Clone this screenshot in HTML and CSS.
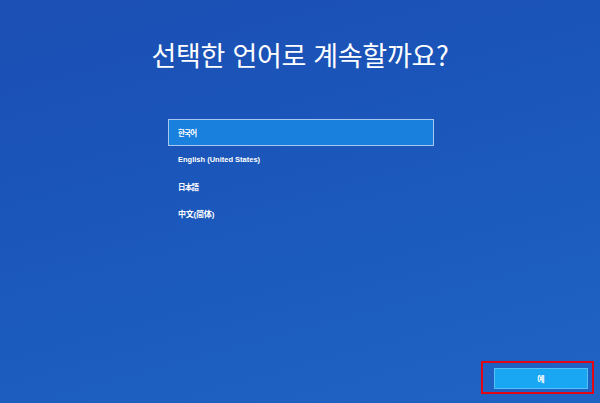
FILE: index.html
```html
<!DOCTYPE html>
<html lang="ko">
<head>
<meta charset="utf-8">
<title>언어 선택</title>
<link rel="stylesheet" href="styles.css">
</head>
<body>
<main class="screen">
  <h1 class="title">선택한 언어로 계속할까요?</h1>
  <ul class="lang-list">
    <li class="lang-item is-selected cjk">한국어</li>
    <li class="lang-item">English (United States)</li>
    <li class="lang-item cjk">日本語</li>
    <li class="lang-item cjk-mixed">中文(简体)</li>
  </ul>
  <footer class="actions">
    <div class="highlight">
      <button class="btn-yes" type="button">예</button>
    </div>
  </footer>
</main>
</body>
</html>
```

FILE: styles.css
```css
html, body {
  margin: 0;
  padding: 0;
}

body {
  width: 600px;
  height: 403px;
  overflow: hidden;
  font-family: "Liberation Sans", "Noto Sans CJK KR", "Noto Sans CJK JP", sans-serif;
  color: #ffffff;
}

.screen {
  width: 600px;
  height: 403px;
  display: flex;
  flex-direction: column;
  background: linear-gradient(165deg, #1c4fb4 0%, #1b55b9 35%, #1c5cbf 65%, #1f63c5 100%);
}

.title {
  margin: 38px 0 0;
  font-family: "Noto Sans CJK KR", "Liberation Sans", sans-serif;
  font-weight: 400;
  font-size: 27px;
  line-height: 33px;
  letter-spacing: -0.3px;
  text-align: center;
}

.lang-list {
  list-style: none;
  margin: 48px 0 0 168px;
  padding: 0;
  width: 266px;
}

.lang-item {
  box-sizing: border-box;
  height: 27px;
  display: flex;
  align-items: center;
  padding-left: 9px;
  font-size: 7.5px;
  font-weight: 700;
  border: 1.5px solid transparent;
}

.lang-item.cjk {
  font-size: 7.5px;
  letter-spacing: -0.8px;
}

.lang-item.cjk-mixed {
  font-size: 8px;
  letter-spacing: -0.2px;
}

.lang-item.is-selected {
  background: #1a80de;
  border-color: #a9c6ee;
}

.actions {
  margin-top: auto;
  display: flex;
  justify-content: flex-end;
  padding: 0 6px 9px 0;
}

.highlight {
  border: 2px solid #e30613;
  padding: 5px 4px 3px 11px;
  display: flex;
}

.btn-yes {
  box-sizing: border-box;
  width: 94px;
  height: 21px;
  margin: 0;
  padding: 0;
  background: #19a7f4;
  border: 1px solid #55bff6;
  color: #ffffff;
  font-family: "Noto Sans CJK KR", sans-serif;
  font-weight: 700;
  font-size: 8px;
  line-height: 1;
}
```
